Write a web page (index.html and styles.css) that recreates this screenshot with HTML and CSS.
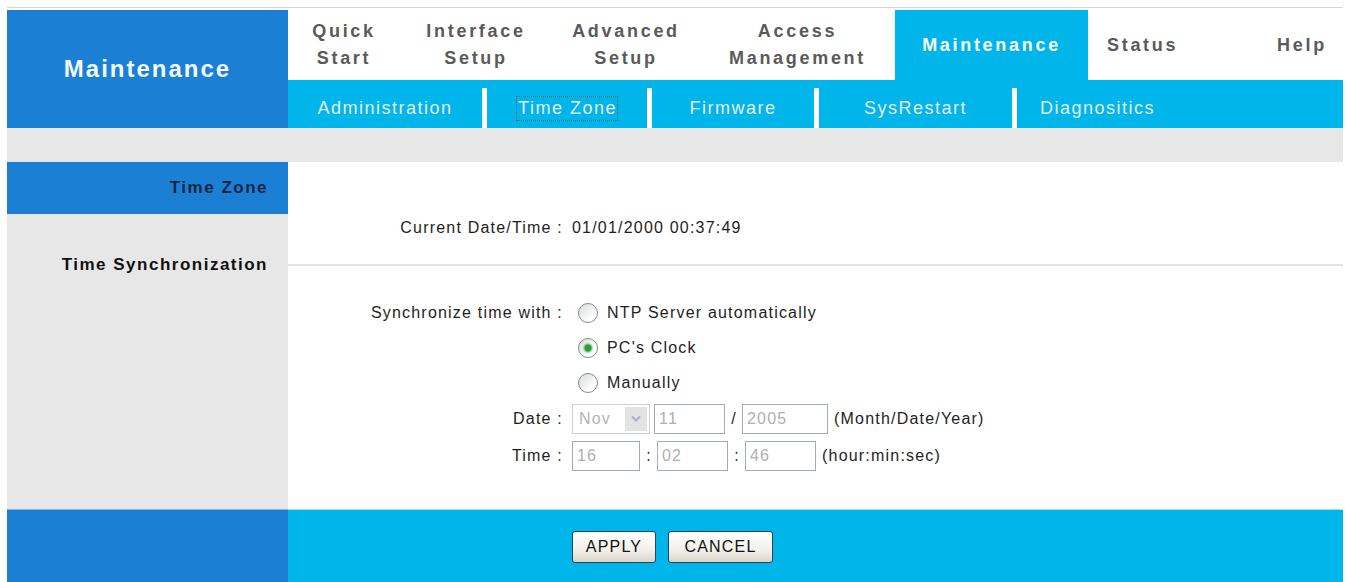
FILE: index.html
```html
<!DOCTYPE html>
<html lang="en">
<head>
  <meta charset="UTF-8">
  <title>Maintenance - Time Zone</title>
  <link rel="stylesheet" href="styles.css">
</head>
<body>
  <div class="page">

    <!-- Header: section title and menus -->
    <div class="header">
      <div class="brand">Maintenance</div>
      <div class="menus">
        <ul class="topnav">
          <li><span>Quick<br>Start</span></li>
          <li><span>Interface<br>Setup</span></li>
          <li><span>Advanced<br>Setup</span></li>
          <li><span>Access<br>Management</span></li>
          <li class="active"><span>Maintenance</span></li>
          <li class="tab-status"><span>Status</span></li>
          <li><span>Help</span></li>
        </ul>
        <ul class="subnav">
          <li class="sub-admin">Administration</li>
          <li class="sep"></li>
          <li class="sub-tz current"><span>Time Zone</span></li>
          <li class="sep"></li>
          <li class="sub-fw">Firmware</li>
          <li class="sep"></li>
          <li class="sub-sr">SysRestart</li>
          <li class="sep"></li>
          <li class="sub-diag">Diagnositics</li>
        </ul>
      </div>
    </div>

    <div class="band"></div>

    <!-- Settings table -->
    <div class="section">
      <div class="side side-title">Time Zone</div>
      <div class="cell"></div>

      <div class="side row-date"></div>
      <div class="cell row-date">
        <div class="field short">
          <span class="lbl">Current Date/Time :</span>
          <span class="val">01/01/2000 00:37:49</span>
        </div>
      </div>

      <div class="side row-rule">Time Synchronization</div>
      <div class="cell row-rule"><hr class="rule"></div>

      <div class="side"></div>
      <div class="form">
        <div class="field">
          <span class="lbl">Synchronize time with :</span>
          <label class="val"><input type="radio" name="sync" class="radio">NTP Server automatically</label>
        </div>
        <div class="field">
          <span class="lbl"></span>
          <label class="val"><input type="radio" name="sync" class="radio" checked>PC's Clock</label>
        </div>
        <div class="field">
          <span class="lbl"></span>
          <label class="val"><input type="radio" name="sync" class="radio">Manually</label>
        </div>
        <div class="field tall">
          <span class="lbl">Date :</span>
          <span class="val">
            <span class="select">
              <span>Nov</span>
              <span class="arrow">
                <svg width="10" height="7" viewBox="0 0 10 7"><path d="M1 1.5 L5 5.5 L9 1.5" fill="none" stroke="#a9b3bd" stroke-width="2"/></svg>
              </span>
            </span>
            <input class="box w-day" value="11" disabled>
            <span class="joint">/</span>
            <input class="box w-year" value="2005" disabled>
            <span class="hint">(Month/Date/Year)</span>
          </span>
        </div>
        <div class="field tall">
          <span class="lbl">Time :</span>
          <span class="val">
            <input class="box w-hour" value="16" disabled>
            <span class="joint">:</span>
            <input class="box w-min" value="02" disabled>
            <span class="joint">:</span>
            <input class="box w-sec" value="46" disabled>
            <span class="hint">(hour:min:sec)</span>
          </span>
        </div>
      </div>

      <div class="side side-foot"></div>
      <div class="foot">
        <div class="field foot-field">
          <span class="lbl"></span>
          <span class="val buttons">
            <button class="btn btn-apply">APPLY</button>
            <button class="btn btn-cancel">CANCEL</button>
          </span>
        </div>
      </div>
    </div>

  </div>
</body>
</html>
```

FILE: styles.css
```css
/* Reset */
* {
  box-sizing: border-box;
  margin: 0;
  padding: 0;
}

body {
  font-family: "Liberation Sans", Arial, sans-serif;
  background-color: #fff;
  color: #1e1e1e;
}

.page {
  width: 1336px;
  margin: 7px 0 0 7px;
  border-top: 1px solid #d6d6d6;
  padding-top: 2px;
}

/* Header */
.header {
  display: flex;
  height: 118px;
}

.brand {
  width: 281px;
  background-color: #1b7fd4;
  color: #f2f9ff;
  font-size: 24px;
  font-weight: bold;
  letter-spacing: 2px;
  display: flex;
  align-items: center;
  justify-content: center;
}

.menus {
  flex: 1;
  display: flex;
  flex-direction: column;
}

/* Top menu */
.topnav {
  list-style: none;
  display: grid;
  grid-template-columns: 112px 152px 148px 195px 193px 173px 82px;
  height: 70px;
}

.topnav li {
  display: flex;
  align-items: center;
  justify-content: center;
  font-size: 18px;
  font-weight: bold;
  letter-spacing: 2.7px;
  line-height: 27px;
  color: #5a5a5a;
  text-align: center;
  white-space: nowrap;
}

.topnav .tab-status {
  justify-content: flex-start;
  padding-left: 19px;
}

.topnav .active {
  background-color: #00b5ea;
  color: #fff;
}

/* Sub menu */
.subnav {
  list-style: none;
  display: flex;
  height: 48px;
  padding-top: 8px;
  background-color: #00b5ea;
}

.subnav li {
  display: flex;
  align-items: center;
  justify-content: center;
  font-size: 18px;
  letter-spacing: 1.5px;
  color: #e3edf3;
  white-space: nowrap;
}

.subnav .sep {
  width: 5px;
  background-color: #fff;
}

.sub-admin { width: 194px; }
.sub-tz { width: 160px; }
.sub-fw { width: 162px; }
.sub-sr { width: 193px; }

.subnav .sub-diag {
  justify-content: flex-start;
  padding-left: 23px;
}

.current span {
  border: 1px dotted #58666e;
  padding: 1px 0 1px 1px;
}

.band {
  height: 34px;
  background-color: #e7e7e7;
}

/* Settings grid */
.section {
  display: grid;
  grid-template-columns: 281px 1fr;
}

.side {
  background-color: #e7e7e7;
  font-size: 17px;
  font-weight: bold;
  letter-spacing: 1.5px;
  color: #111;
  display: flex;
  align-items: center;
  justify-content: flex-end;
  padding-right: 20px;
}

.side-title {
  height: 52px;
  background-color: #1b7fd4;
  color: #152447;
}

.cell {
  display: flex;
  align-items: center;
}

.row-date {
  height: 28px;
}

.row-rule {
  height: 46px;
}

.rule {
  width: 100%;
  height: 2px;
  border: 0;
  background-color: #e2e2e2;
}

.form {
  padding: 7px 0 35px;
}

.field {
  display: grid;
  grid-template-columns: 275px 1fr;
  column-gap: 9px;
  align-items: center;
  height: 35px;
  font-size: 16px;
  letter-spacing: 1.2px;
}

.field.short {
  height: 28px;
  width: 100%;
}

.field.tall {
  height: 37px;
}

.lbl {
  text-align: right;
  white-space: nowrap;
}

.val {
  display: flex;
  align-items: center;
  white-space: nowrap;
}

/* Radio buttons */
.radio {
  appearance: none;
  width: 20px;
  height: 20px;
  margin: 0 9px 0 6px;
  border: 1px solid #7f8c98;
  border-radius: 50%;
  background: linear-gradient(135deg, #d9d9d4, #fff 75%);
}

.radio:checked {
  background:
    radial-gradient(circle, #2e9c3a 0 3px, #93d093 4px, transparent 5.5px),
    linear-gradient(135deg, #d9d9d4, #fff 75%);
}

/* Date and time inputs */
.select {
  width: 78px;
  height: 30px;
  display: flex;
  align-items: center;
  justify-content: space-between;
  border: 1px solid #cfcfcf;
  padding: 2px 2px 2px 6px;
  color: #b4b4b4;
  margin-right: 4px;
}

.arrow {
  width: 22px;
  height: 24px;
  background-color: #e3e3e3;
  display: flex;
  align-items: center;
  justify-content: center;
}

.box {
  height: 30px;
  border: 1px solid #a3adb6;
  background-color: #fff;
  color: #b0b0b0;
  font: inherit;
  letter-spacing: inherit;
  padding: 0 4px;
}

.w-day { width: 71px; }
.w-year { width: 86px; }
.w-hour { width: 68px; }
.w-min { width: 71px; }
.w-sec { width: 71px; }

.joint {
  width: 17px;
  text-align: center;
  letter-spacing: 0;
}

.hint {
  margin-left: 6px;
}

/* Footer with buttons */
.side-foot {
  height: 74px;
  background-color: #1b7fd4;
  border-top: 1px solid #7fb9e8;
}

.foot {
  background-color: #00b5ea;
  border-top: 1px solid #9fe2f6;
}

.foot-field {
  height: 73px;
}

.buttons {
  gap: 12px;
}

.btn {
  height: 32px;
  font-family: "Liberation Sans", Arial, sans-serif;
  font-size: 16px;
  letter-spacing: 1.2px;
  color: #111;
  border: 1px solid #34424f;
  border-radius: 3px;
  background: linear-gradient(#ffffff, #f1f0ea 60%, #d9d5ca);
}

.btn-apply { width: 84px; }
.btn-cancel { width: 105px; }
```
